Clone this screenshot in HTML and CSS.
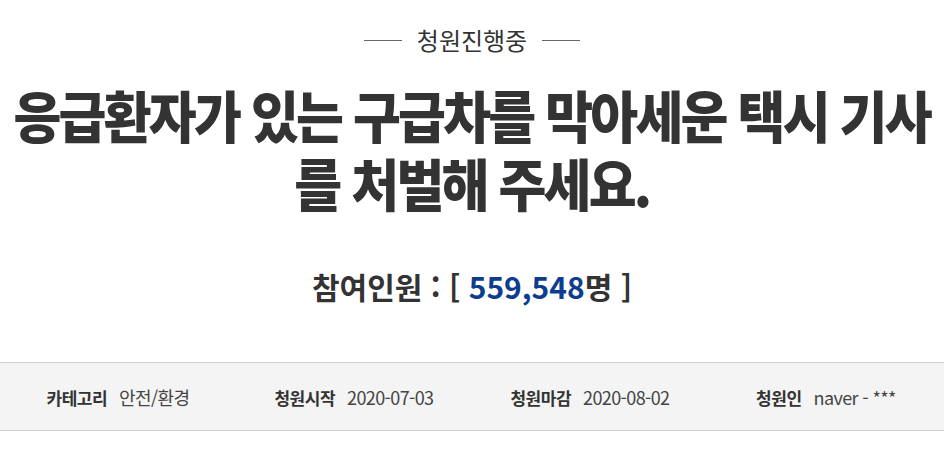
FILE: index.html
```html
<!DOCTYPE html>
<html lang="ko">
<head>
<meta charset="utf-8">
<link rel="stylesheet" href="styles.css">
</head>
<body>
<div class="page">
  <div class="status"><span class="line"></span><span class="status-text">청원진행중</span><span class="line"></span></div>
  <h1 class="title">
    <span class="tline">응급환자가 있는 구급차를 막아세운 택시 기사</span>
    <span class="tline">를 처벌해 주세요.</span>
  </h1>
  <div class="count">참여인원 : [ <span class="num">559,548</span>명 ]</div>
  <ul class="info">
    <li><strong>카테고리</strong><span>안전/환경</span></li>
    <li><strong>청원시작</strong><span>2020-07-03</span></li>
    <li><strong>청원마감</strong><span>2020-08-02</span></li>
    <li><strong>청원인</strong><span>naver - ***</span></li>
  </ul>
</div>
</body>
</html>
```
FILE: styles.css
```css
* { box-sizing: border-box; }
html, body { margin: 0; padding: 0; background: #fff; overflow: hidden; }
body { font-family: "Noto Sans CJK KR", "Noto Sans", sans-serif; color: #333; }
.page { width: 944px; }
.status {
  display: flex; align-items: center; justify-content: center;
  gap: 15px; padding-top: 22px; height: 58px;
}
.status .line { width: 38px; height: 1px; background: #666; }
.status-text { font-size: 24px; color: #333; line-height: 30px; }
.title {
  margin: 22px 0 0; display: flex; flex-direction: column; align-items: center;
  font-size: 56px; font-weight: 900; line-height: 68px;
  letter-spacing: -3px; color: #333;
}
.tline { display: block; white-space: nowrap; transform: scaleX(0.93); }
.count {
  margin-top: 50px; text-align: center;
  font-size: 30px; font-weight: 700; line-height: 40px; color: #333;
}
.count .num { color: #0d3e8e; }
.info {
  list-style: none; margin: 56px 0 0; padding: 0;
  display: grid; grid-template-columns: repeat(4, 1fr);
  height: 69px; align-items: center;
  background: #f4f4f4; border-top: 1px solid #cfcfcf; border-bottom: 1px solid #cfcfcf;
}
.info li { display: flex; justify-content: center; align-items: baseline; gap: 12px; color: #333; }
.info strong { font-weight: 700; font-size: 17px; letter-spacing: -0.5px; }
.info span { color: #444; font-size: 18px; letter-spacing: -0.6px; }
```
